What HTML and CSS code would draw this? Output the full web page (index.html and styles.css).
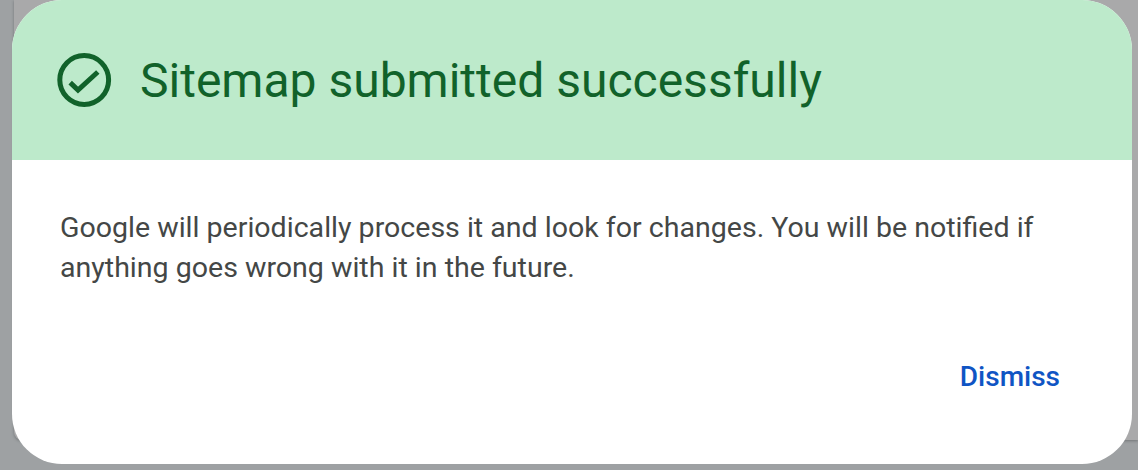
FILE: index.html
```html
<!DOCTYPE html>
<html lang="en">
<head>
<meta charset="utf-8">
<title>Sitemap submitted</title>
<link rel="stylesheet" href="styles.css">
</head>
<body>
<div class="backdrop-panel"></div>
<section class="dialog">
  <header class="dialog-header">
    <svg class="status-icon" viewBox="0 0 56 56" aria-hidden="true">
      <circle cx="28.2" cy="28" r="24.4"/>
      <path d="M14.2 30.6 22 38 41.8 20"/>
    </svg>
    <h1 class="dialog-title">Sitemap submitted successfully</h1>
  </header>
  <div class="dialog-body">
    <p class="dialog-text">Google will periodically process it and look for changes. You will be notified if anything goes wrong with it in the future.</p>
  </div>
  <footer class="dialog-actions">
    <button class="dismiss" type="button">Dismiss</button>
  </footer>
</section>
</body>
</html>
```
FILE: styles.css
```css
html, body {
  margin: 0;
  height: 470px;
  overflow: hidden;
}
body {
  position: relative;
  background: #9ea1a3;
  font-family: Roboto, "Liberation Sans", sans-serif;
}
.backdrop-panel {
  position: absolute;
  left: 14px;
  top: 0;
  right: 0;
  height: 440px;
  background: #a9a9aa;
  border-bottom-left-radius: 8px;
  box-shadow: 0 1px 3px rgba(60, 64, 67, 0.45);
}
.dialog {
  position: absolute;
  left: 12px;
  top: 0;
  width: 1120px;
  height: 464px;
  background: #fff;
  border-radius: 50px;
  overflow: hidden;
  display: flex;
  flex-direction: column;
}
.dialog-header {
  height: 160px;
  background: #bdeacb;
  display: flex;
  align-items: center;
  gap: 28px;
  padding-left: 44px;
  color: #11622a;
  flex: none;
}
.status-icon {
  width: 56px;
  height: 56px;
  fill: none;
  stroke: #11622a;
  stroke-width: 5;
  flex: none;
}
.dialog-title {
  margin: 2px 0 0;
  font-size: 48px;
  font-weight: 400;
  line-height: 60px;
}
.dialog-body {
  flex: 1;
  padding: 48px 48px 0;
}
.dialog-text {
  margin: 0;
  font-size: 28.55px;
  line-height: 40px;
  color: #444746;
}
.dialog-actions {
  display: flex;
  justify-content: flex-end;
  padding: 0 72px 69px 0;
}
.dismiss {
  border: 0;
  padding: 0;
  background: none;
  font: 500 28px/36px Roboto, "Liberation Sans", sans-serif;
  color: #0f55c4;
}
```
